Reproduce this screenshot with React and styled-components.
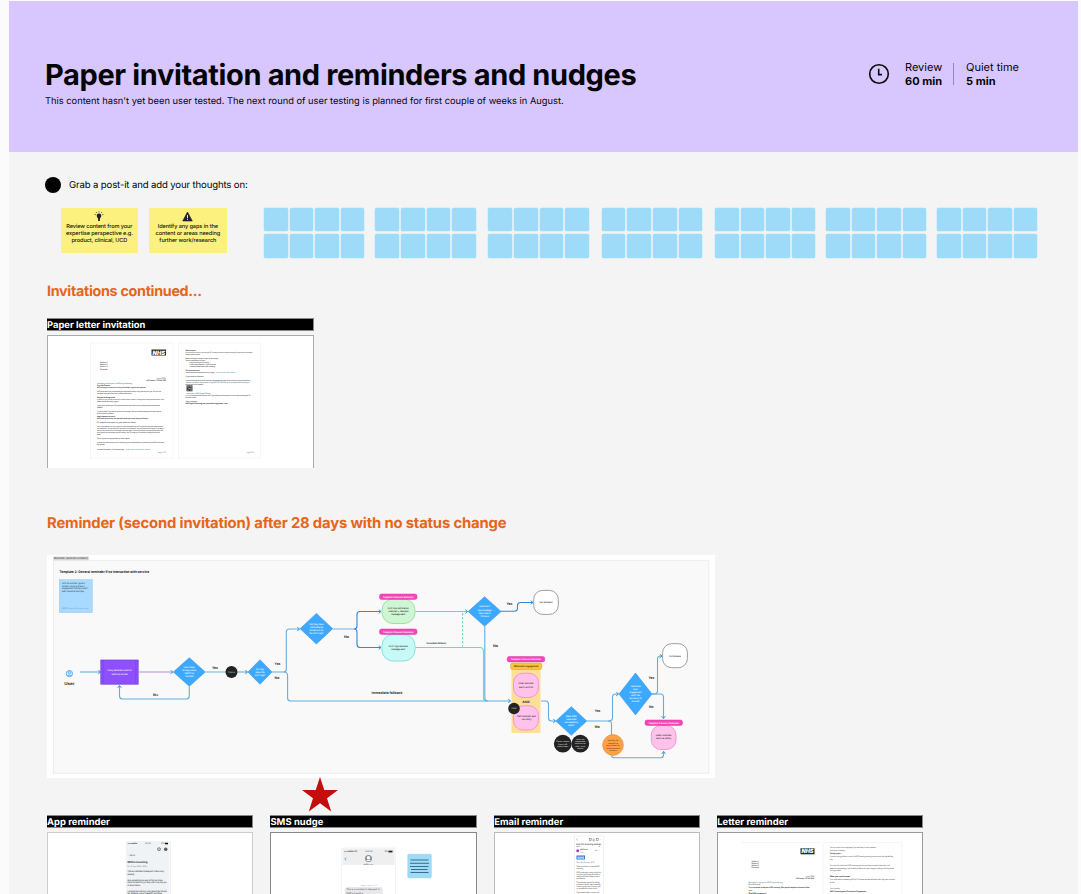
import React from "react";
import styled, { createGlobalStyle } from "styled-components";

const Global = createGlobalStyle`
  *{box-sizing:border-box}
  body{margin:0;background:#fbfbfb;overflow:hidden;font-family:Inter,"Open Sans",sans-serif;color:#050505;text-rendering:geometricPrecision}
  svg{display:block}
`;
const Board = styled.main`
  width:1069px;height:893px;margin:1px 0 0 9px;background:#f4f4f4;overflow:hidden;
  display:flex;flex-direction:column;
`;
const Banner = styled.header`
  height:151px;flex:none;background:#d8c7ff;padding:57px 59px 0 36px;
  display:flex;justify-content:space-between;align-items:flex-start;
`;
const Title = styled.h1`
  margin:0;font-size:29px;line-height:34px;font-weight:700;letter-spacing:${p => p.$ls};white-space:nowrap;
`;
const Subtitle = styled.p`
  margin:3px 0 0;font-size:9.3px;line-height:14px;letter-spacing:${p => p.$ls};white-space:nowrap;
`;
const Timing = styled.div`display:flex;align-items:center;padding-top:2px;`;
const ClockIcon = styled.svg`margin-right:15px;`;
const Slot = styled.div`
  font-size:11px;line-height:14px;letter-spacing:${p => p.$ls};white-space:nowrap;width:${p => p.$w}px;
  strong{display:block;font-weight:700;}
`;
const Divider = styled.i`width:1px;height:22px;background:#9688b5;margin:0 12px 0 10px;`;
const Prompt = styled.div`
  display:flex;align-items:center;gap:8px;margin:25px 0 0 36px;height:16px;font-size:9.6px;letter-spacing:${p => p.$ls};
  span{padding-top:1px}
`;
const Dot = styled.i`width:16px;height:16px;border-radius:50%;background:#000;`;
const NoteRow = styled.section`display:flex;margin:14.5px 0 0 51.6px;height:51px;align-items:flex-start;`;
const YellowNote = styled.article`
  width:77.5px;height:45.5px;margin-right:11px;background:#fcf07e;border-radius:1px;flex:none;
  display:flex;flex-direction:column;align-items:center;padding-top:3.5px;
  font-size:5.6px;line-height:7.1px;text-align:center;color:#111;font-weight:500;white-space:nowrap;letter-spacing:${p => p.$ls};
  svg{margin-bottom:1.6px;flex:none}
`;
const Pads = styled.div`display:flex;margin-left:26.5px;`;
const Pad = styled.div`
  display:grid;grid-template-columns:repeat(4,23.6px);grid-auto-rows:23.6px;gap:3.4px 2px;margin-right:${p => p.$gap}px;
`;
const Tile = styled.i`background:#9edbf9;box-shadow:0 0 0 .5px #c4e8fa;border-radius:1.5px;`;
const Heading = styled.h2`
  margin:${p => p.$top}px 0 0 38px;font-size:${p => p.$size}px;line-height:18px;font-weight:700;color:#e66519;
  letter-spacing:${p => p.$ls};white-space:nowrap;
`;
const Card = styled.article`width:${p => p.$w}px;flex:none;`;
const CardTitle = styled.h3`
  margin:0;height:13.5px;background:#000;border:1px solid #888;border-left:0;color:#fff;
  font-size:9.4px;line-height:13px;font-weight:700;letter-spacing:${p => p.$ls};white-space:nowrap;
`;
const Frame = styled.div`
  margin-top:4px;height:${p => p.$h}px;background:#fff;border:1px solid ${p => p.$line || "#aaa"};border-bottom:0;overflow:hidden;
  svg{margin:-1px 0 0 -1px}
`;
const Section = styled.section`margin:${p => p.$top}px 0 0 38px;`;
const FlowBoard = styled.section`margin:23.5px 0 0 38px;width:668px;height:223px;background:#fff;flex:none;`;
const StarRow = styled.div`height:36px;padding-left:293px;flex:none;svg{margin-top:-1px}`;
const CardRow = styled.section`display:flex;gap:17.4px;margin:.5px 0 0 38px;`;

const Tiny = ({ x, y, w, s, anchor, weight = 400, c, children }) => (
  <text transform={`translate(${x} ${y}) scale(.1)`} fontSize={s * 10} fontWeight={weight} fill={c} textAnchor={anchor}
    textLength={w * 10} lengthAdjust="spacingAndGlyphs">{children}</text>
);
const T = ({ x, y, w, s = 2, b, c = "#333", children }) => (
  <Tiny x={x} y={y} w={w} s={s} weight={b ? 700 : 400} c={c}>{children}</Tiny>
);
const Lines = ({ cx, y, rows, w, lh = 3.1, s = 2.1, c = "#fff" }) => rows.map((r, i) => (
  <Tiny key={i} x={cx} y={y + i * lh} w={w[i]} s={s} c={c} weight={500} anchor="middle">{r}</Tiny>
));
const Copy = ({ rows, s = 1.9 }) => rows.map(([x, y, w, t, c = "#333", b], i) => (
  <Tiny key={i} x={x} y={y} w={w} s={s} c={c} weight={b ? 700 : 500}>{t}</Tiny>
));

const Diamond = ({ x, y, w, h }) => (
  <path d={`M${x} ${y - h}L${x + w} ${y}L${x} ${y + h}L${x - w} ${y}Z`} fill="#3ca9ff" stroke="#3699ea" strokeWidth=".6" strokeLinejoin="round" />
);
const Wire = ({ d, c = "#64addf", head = true, dash, w = 1.1 }) => (
  <path d={d} fill="none" stroke={c} strokeWidth={w} strokeDasharray={dash} markerEnd={head ? "url(#tip)" : undefined} />
);
const Pill = ({ x, y, w = 38, c = "#f446bb", k = "#d93aa5", t = "Template 2: Generic Reminder", tc = "#fff", h = 5.4 }) => (
  <g><rect x={x} y={y} width={w} height={h} rx="2" fill={c} stroke={k} strokeWidth=".5" /><T x={x + 3.5} y={y + h / 2 + .8} w={w - 7} s={2.4} b c={tc}>{t}</T></g>
);
const Nhs = ({ x, y, w, h, c = "#26292b" }) => (
  <g><rect x={x} y={y} width={w} height={h} fill={c} /><text x={x + 1} y={y + h - .9} fontSize={h - .2} fontWeight="900" fontStyle="italic" fill="#fff" textLength={w - 2} lengthAdjust="spacingAndGlyphs">NHS</text></g>
);

function FlowChart() {
  return (
    <svg width="668" height="223.5" viewBox="47 555 668 223.5">
      <defs><marker id="tip" viewBox="0 0 6 6" refX="5" refY="3" markerWidth="5" markerHeight="5" markerUnits="userSpaceOnUse" orient="auto">
        <path d="M2.3 .8L5 3L2.3 5.2" fill="none" stroke="#3390d8" strokeWidth="1.2" /></marker></defs>
      <rect x="53.3" y="560.3" width="655.5" height="213" fill="#f9f9f9" stroke="#e8e8e8" strokeWidth=".8" />
      <rect x="53.3" y="556.5" width="35.5" height="3.8" fill="#d9d9d9" />
      <T x={54} y={559.3} w={34} s={2.8} c="#222">Reminder (second invitation)</T>
      <T x={59.5} y={572.6} w={89.5} s={3.5} b c="#222">Template 2: General reminder if no interaction with service</T>
      <rect x="59.3" y="579.7" width="33" height="33" fill="#a8daff" stroke="#93c7ec" strokeWidth=".5" />
      <T x={62} y={584} w={23} s={2.1}>Until the reminder: generic</T>
      <T x={62} y={586.6} w={23} s={2.1}>content, covering those in</T>
      <T x={62} y={589.2} w={26} s={2.1}>engagement that they haven't</T>
      <T x={62} y={591.8} w={22} s={2.1}>been joined to start app</T>
      <T x={62} y={609.3} w={26} s={2} c="#5f8fae">NBSS: Generic 2nd invite date</T>

      <circle cx="69.4" cy="673.6" r="3.1" fill="#dff1ff" stroke="#3ca9ff" strokeWidth=".9" />
      <circle cx="69.4" cy="672.7" r="1.1" fill="none" stroke="#3390d8" strokeWidth=".7" />
      <path d="M67.4 675.9q2-2 4 0" fill="none" stroke="#3390d8" strokeWidth=".7" />
      <T x={64.2} y={684.5} w={10.5} s={4.2} b>User</T>
      <Wire d="M80 672H100.5" />
      <rect x="100.8" y="660" width="37.4" height="24.2" fill="#8e4fff" stroke="#7440d3" strokeWidth=".7" />
      <path d="M103.3 660V684M135.7 660V684" stroke="#7440d3" strokeWidth=".5" />
      <Lines cx={119.5} y={671.4} rows={["Every Reminder event to", "within to normal"]} w={[24, 16]} />
      <Wire d="M138.5 672H172.8" c="#b48be0" />
      <Diamond x={189.3} y={672} w={16} h={14.3} />
      <Lines cx={189.3} y={668} rows={["Has it been", "28 days since", "NBSS is", "normal"]} w={[11, 14, 9, 8]} />
      <T x={212} y={668.6} w={6} s={3.5} b>Yes</T>
      <Wire d="M205.5 672H226" head={false} c="#78bdec" />
      <Wire d="M237.5 672H247.5" /><circle cx="231.5" cy="672" r="6" fill="#222" />
      <Lines cx={231.5} y={672.8} rows={["Status"]} w={[7]} c="#bbb" />
      <Diamond x={260} y={672} w={12} h={12.3} />
      <Lines cx={260} y={669.7} rows={["Do they", "have the", "NHS App?"]} w={[8, 9, 10.5]} />
      <Wire d="M189.3 686.5V696q0 3-3 3H122.5q-3 0-3-3V685.5" />
      <T x={153} y={696.2} w={5.2} s={3.4} b>No</T>
      <T x={274.6} y={665.2} w={5.8} s={3.5} b>Yes</T><T x={274.6} y={679} w={5} s={3.5} b>No</T>
      <Wire d="M272 672H284q2.3 0 2.3-3V632q0-3 3-3H299.5" />
      <Wire d="M284 672q3.6 0 3.6 4V698q0 3 3 3H510.5" />
      <T x={371.5} y={693.6} w={31} s={3.6} b>Immediate fallback</T>
      <Diamond x={316.4} y={628.7} w={16.3} h={15.3} />
      <Lines cx={316.4} y={624.5} rows={["Did they have", "notifications", "turned on for", "the NHS App?"]} w={[14, 13, 14, 14]} />
      <Wire d="M354 629q3 0 3-3V614.5q0-3 3-3H381" c="#3288d2" />
      <Wire d="M354 629q3 0 3 3V644.5q0 3 3 3H381" c="#3288d2" />
      <Wire d="M333 629H355" c="#84bfe9" head={false} w={1.2} />
      <T x={344} y={637.6} w={5} s={3.5} b>No</T>
      <rect x="382" y="599" width="33" height="24.5" rx="11" fill="#cff6d3" stroke="#a2dfaa" />
      <Lines cx={398.3} y={608.8} rows={["NHS App notification", "(natural) + tailored", "message sent"]} w={[21, 20, 14]} c="#222" />
      <rect x="382" y="634.5" width="33" height="26.5" rx="11" fill="#c7faf7" stroke="#8be1dd" />
      <Lines cx={398.3} y={647} rows={["NHS App tailored", "message sent"]} w={[19, 14]} c="#222" />
      <Pill x={379.5} y={594} w={37.5} /><Pill x={379.5} y={629} w={37.5} />
      <Wire d="M415.5 611.5H467.5" c="#78d692" />
      <Wire d="M415.5 647.5H480q3.5 0 3.5 4V698q0 3 3 3" c="#70d5cd" head={false} />
      <Wire d="M462.6 613V646.5" c="#70d5cd" head={false} dash="2.5 1.5" />
      <T x={426.5} y={644} w={19.5} s={2.5} b>Immediate fallback</T>
      <Diamond x={484.6} y={611.5} w={16.5} h={14.8} />
      <Lines cx={484.6} y={607.4} rows={["Has the NHS", "App message", "been read in", "72 hours"]} w={[11, 14, 11.5, 8.5]} />
      <Wire d="M484.8 626.5V698q0 3 3 3" head={false} />
      <T x={493} y={647} w={5} s={3.5} b>No</T>
      <T x={506.5} y={605.4} w={6} s={3.5} b>Yes</T>
      <Wire d="M501 611.3H514q3.5 0 3.5-3V605.5q0-3 3-3H533" c="#3288d2" />
      <rect x="533.7" y="590.4" width="24.6" height="24" rx="9" fill="#fff" stroke="#888" strokeWidth=".8" />
      <Lines cx={546} y={603.4} rows={["No fallback"]} w={[13]} c="#222" />

      <rect x="511.5" y="663" width="29" height="70" fill="#fddf9a" />
      <Pill x={507.2} y={656.5} w={37.5} /><Pill x={510.5} y={663} w={31.3} h={6.5} c="#fbc43c" k="#d8a22b" t="NHS multi-engagement" tc="#332800" />
      <rect x="513.5" y="673.2" width="25" height="24.3" rx="9.5" fill="#ffc2eb" stroke="#f78dd6" strokeWidth=".9" />
      <rect x="513.5" y="705.8" width="25" height="24.3" rx="9.5" fill="#ffc2eb" stroke="#f78dd6" strokeWidth=".9" />
      <Lines cx={526} y={684.4} rows={["Email reminder", "sent via PHG"]} w={[15, 14]} c="#222" />
      <T x={522.2} y={702.6} w={7.5} s={3.1} b>AND</T>
      <Lines cx={526.5} y={717} rows={["SMS reminder sent", "via notify"]} w={[19, 10]} c="#222" />
      <circle cx="514" cy="708.5" r="5.8" fill="#222" /><Lines cx={514} y={709.3} rows={["Email"]} w={[5]} c="#ccc" />
      <Wire d="M541 701H545.5q3 0 3 3V718q0 3 3 3H555.5" />
      <Diamond x={571.3} y={721} w={15.5} h={14.3} />
      <Lines cx={571.3} y={717} rows={["Was SMS", "received", "successfully", "sent?"]} w={[11, 10, 13.5, 6]} />
      <circle cx="562.8" cy="743.7" r="8.9" fill="#222" /><circle cx="580.3" cy="743.7" r="8.9" fill="#222" />
      <Lines cx={562.8} y={742} rows={["Check status", "from PHG", "each hour"]} w={[13, 9, 11]} s={1.9} lh={2.5} c="#ddd" />
      <Lines cx={580.3} y={739.8} rows={["Send and", "separate", "failures for", "SMS / email", "status"]} w={[8, 10, 11, 10, 6]} s={1.8} lh={2.3} c="#ddd" />
      <T x={594.8} y={712} w={5.5} s={3.5} b>Yes</T><T x={594.8} y={728.2} w={5} s={3.5} b>No</T>
      <Wire d="M587 721H608q4.5 0 4.5-3V697q0-3 3-3H618.5" />
      <Wire d="M608 721q3.5 0 3.5 3V735" head={false} />
      <circle cx="613" cy="745" r="10.4" fill="#ffa044" stroke="#df8935" strokeWidth=".6" />
      <Lines cx={613} y={741.3} rows={["Identify for", "request to", "pay letter to", "recommended", "in hours"]} w={[11, 10, 13, 14, 8]} s={1.9} lh={2.5} c="#64401c" />
      <Wire d="M611.5 755.5q0 2.2 3 2.2H660.6q3 0 3-3V751.5" />
      <Diamond x={635.5} y={694} w={16.5} h={21} />
      <Lines cx={635.5} y={686.7} rows={["Has there", "been", "engagement", "with the", "service in 72", "hours?"]} w={[10, 5, 12, 9, 12, 8]} />
      <T x={648.5} y={679.2} w={5.8} s={3.5} b>Yes</T><T x={649} y={708.4} w={4.5} s={3.5} b>No</T>
      <Wire d="M652 694H654.5q3 0 3-3V659q0-3 3-3H662" />
      <Wire d="M652 694H660.5q3 0 3 3V718.5" />
      <rect x="662.6" y="643.7" width="24.8" height="24" rx="9" fill="#fff" stroke="#888" strokeWidth=".8" />
      <Lines cx={675} y={656.5} rows={["End fallback"]} w={[12]} c="#222" />
      <rect x="651.3" y="725.5" width="24.7" height="24" rx="9.5" fill="#ffc2eb" stroke="#f78dd6" strokeWidth=".9" />
      <Lines cx={663.7} y={736} rows={["Letter reminder", "sent via Notify"]} w={[16, 15]} c="#222" />
      <Pill x={645} y={720} w={37.5} />
    </svg>
  );
}

const teal = "#2b7186";
const pageOne = [
  [97, 384, 35, "Invitation to take part in NHS lung screening", teal],
  [97, 386.2, 13, "Dear Ms Sample", "#222", 1],
  [97, 388.3, 49, "NHS screening is a new service to help prevent bowel, lung and other problems.", "#222", 1],
  [97, 392.2, 64, "NHS online means you can complete your health check online at any time that suits you. You can also"],
  [97, 394.3, 35, "choose to have your check with a health professional."],
  [97, 398, 18, "Why you are being invited", "#111", 1],
  [97, 400, 67, "It checks for signs you may be more likely to develop some conditions, including stroke, kidney and heart disease, which"],
  [97, 402, 22, "often have no early signs."],
  [97, 406.2, 63, "Taking part in screening and finding out more about your health early can help you to prevent problems"],
  [97, 408.2, 6, "later."],
  [97, 412, 64, "It is your choice if you want to take part in screening. You can read more about your choices and the"],
  [97, 414, 17, "tests at the link below."],
  [97, 417.7, 18, "How to complete the check", "#111", 1],
  [97, 419.8, 51, "NHS health check online asks questions about your health, body and lifestyle", "#222", 1],
  [97, 423.7, 39, "Or complete the check on your phone or tablet."],
  [97, 427.7, 66, "Then, if you need to, we will ask you to visit your local pharmacy or GP surgery to check your blood pressure"],
  [97, 429.7, 67, "and cholesterol. This can help tell if you are at risk of problems. You may have to do this again if a reading is"],
  [97, 431.7, 66, "unclear. Your results will be sent to you within two weeks. We will also explain what your results mean and"],
  [97, 433.7, 63, "what you can do next to keep yourself healthy. Your GP surgery will also receive a copy of the results"],
  [97, 435.7, 4, "too."],
  [97, 439, 33, "Call us if you have any questions or need support."],
  [97, 443, 67, "If you do not want to take part in this screening, you can opt out online or by contacting the NHS service team"],
  [97, 445, 8, "by phone."],
  [97, 450.8, 27, "For more information, visit the web page:"],
  [125.5, 450.8, 25, "www.nhs.uk/health-check", "#4c98af"],
];
const pageTwo = [
  [185.5, 351.5, 10, "What to expect", "#111", 1],
  [185.5, 353.5, 67, "We will send your results to you and your GP. You may be asked to contact the surgery for more advice and support"],
  [185.5, 355.5, 15, "about your results."],
  [185.5, 359.2, 33, "Before starting the check it helps to have ready:"],
  [185.5, 361.2, 20, "You will need details of your:"],
  [189, 363.3, 20, "• height and weight in cm and kg"],
  [189, 365.3, 27, "• waist measurement, if you have one"],
  [189, 367.3, 26, "• recent blood pressure reading"],
  [185.5, 371, 14, "Start your health check", "#111", 1],
  [185.5, 373, 29, "You can complete the questions on this page"],
  [216, 373, 19, "www.nhs.uk/start", "#4c98af"],
  [185.5, 377, 18, "If you need assistance"],
  [185.5, 381, 65, "If you cannot complete the check online you can contact the support team and they will help you complete it"],
  [185.5, 383.2, 64, "www.nhs.uk/contact-health-check or ring 0300 123 1234 and we will arrange another way for you", teal],
  [185.5, 385.2, 18, "to take part with support."],
  [185.5, 394.5, 25, "Thank you, NHS Health Check", teal],
  [185.5, 396.6, 65, "This is an automated letter from the NHS. If you think you have received it in error, please contact your GP"],
  [185.5, 398.6, 11, "to let them know."],
  [185.5, 402.5, 12, "Yours sincerely,"],
  [185.5, 404.5, 42, "NHS Digital Screening and Prevention Programme Team", "#111", 1],
];

function Address({ x, y }) {
  return ["Address 1", "Address 2", "Address 3", "Postcode"].map((t, i) => <T key={t} x={x} y={y + i * 2.3} w={7.5} s={2} b c="#555">{t}</T>);
}
function LetterArt() {
  return (
    <svg width="266" height="132.5" viewBox="47 335.5 266 132.5">
      <rect x="90.5" y="343.5" width="82.5" height="115" fill="#fff" stroke="#f3f3f3" strokeWidth=".7" />
      <rect x="178.5" y="343.5" width="82" height="115" fill="#fff" stroke="#f3f3f3" strokeWidth=".7" />
      <Nhs x={151.5} y={350} w={14.5} h={6} />
      <Address x={100} y={363.2} />
      <T x={156} y={379.6} w={10} s={1.9}>1 July 2024</T><T x={146.5} y={381.7} w={19.5} s={1.9} b>NHS number: 123 456 7890</T>
      <Copy rows={pageOne} /><T x={158} y={453.5} w={8} s={1.9}>Page 1 of 2</T>
      <Copy rows={pageTwo} /><T x={247} y={453.5} w={7} s={1.9}>Page 2 of 2</T>
      <rect x="186.5" y="385.8" width="6" height="6" fill="#444" />
      <path d="M187.3 387.3h1.5M190 386.8h1.5M188.5 389h2M187.3 390.8h1.2M190.3 390.5h1.5M191.5 388v1" stroke="#ddd" strokeWidth=".6" />
    </svg>
  );
}
function AppArt() {
  return (
    <svg width="206" height="63" viewBox="47 832 206 63">
      <rect x="126" y="841" width="43.5" height="55" fill="#eff3f5" /><path d="M170.5 841V895" stroke="#eee" strokeWidth=".8" />
      <T x={127.5} y={844.3} w={9.5} s={2} b c="#111">•••• mobile</T><T x={145} y={844.3} w={5.5} s={2}>9:41 AM</T><T x={161} y={844.3} w={3.8} s={2}>100%</T><rect x="165" y="842.8" width="3" height="1.5" fill="#111" />
      <circle cx="159" cy="849.2" r="1.5" fill="none" stroke="#444" strokeWidth=".6" /><path d="M159 848.4v1.5" stroke="#444" strokeWidth=".5" />
      <circle cx="165.7" cy="849.2" r="1.7" fill="#444" /><path d="M164 849h3.4M165.7 847.5v3.4" stroke="#aaa" strokeWidth=".3" />
      <T x={128.5} y={856.3} w={6.5} s={2.4} b c="#3489c6">‹ Back</T>
      <T x={127.5} y={863} w={20} s={2.8} b c="#222">NHS screening</T>
      <T x={127.5} y={866.8} w={20} s={2} c="#668">Sent: 9 August 2024 at 9:30am</T>
      <Copy s={2.2} rows={[
        [127.5, 872, 36, "This is a reminder to take part in NHS lung", "#222"], [127.5, 875, 7, "screening.", "#222"],
        [127.5, 880.5, 35, "NHS screening is a way to find out more"], [127.5, 883.2, 39, "about the health of your body, which may help you"], [127.5, 886, 13, "to make choices."],
        [127.5, 891.5, 39, "A programme is starting. It only takes a few minutes"], [127.5, 894.2, 35, "to check your health online."]]} />
    </svg>
  );
}
function SmsArt() {
  return (
    <svg width="206.5" height="63" viewBox="270.5 832 206.5 63">
      <path d="M342 894V848H396V894" fill="#fff" stroke="#ececec" strokeWidth=".6" /><rect x="343" y="848.5" width="52" height="16.5" fill="#efeff0" />
      <T x={344.5} y={852.3} w={13} s={2.1} b>•••• mobile LTE</T><T x={366} y={852.3} w={7} s={2.1}>9:41 AM</T><T x={385} y={852.3} w={3.8} s={2}>100%</T><rect x="389" y="850.7" width="4" height="1.7" fill="#222" />
      <path d="M346.6 857.4L345.4 858.9L346.6 860.4" fill="none" stroke="#2687e9" strokeWidth=".7" />
      <circle cx="369" cy="858.5" r="3.5" fill="#8b9199" /><circle cx="369" cy="857.8" r="1.7" fill="#fff" /><path d="M366.5 861q2.5-3 5 0" fill="#fff" />
      <T x={364} y={864.5} w={9.5} s={1.9}>NHSscreen</T>
      <T x={360.5} y={885.5} w={17} s={1.8} c="#999">Today, 9 Sep at 10:30</T>
      <rect x="345.3" y="887" width="38" height="12" rx="2.5" fill="#e8e8ea" />
      <T x={347} y={890.3} w={33} s={2.4}>This is a reminder to take part in</T><T x={347} y={893.6} w={17} s={2.4}>NHS screening.</T>
      <rect x="408.3" y="854.3" width="23.5" height="23.5" rx=".8" fill="#9edbf9" stroke="#88c9e8" strokeWidth=".5" />
      <path d="M411 860H429M410.5 863.3H429.5M410.5 866.5H429M411.5 869.5H428M411 872.5H429" stroke="#275b73" strokeWidth=".85" />
    </svg>
  );
}
function EmailArt() {
  return (
    <svg width="205.5" height="63" viewBox="494 832 205.5 63">
      <path d="M574.5 894V836H603.5V894" fill="#fff" stroke="#eee" strokeWidth=".8" />
      <path d="M577.5 838.6L576.6 839.5L577.5 840.4" fill="none" stroke="#777" strokeWidth=".5" />
      <g fill="none" stroke="#666" strokeWidth=".5"><rect x="589.5" y="838.5" width="1.7" height="2" /><path d="M592.8 839h1.7M593 839.5v1.3h1.3v-1.3" /><rect x="596.2" y="838.7" width="2" height="1.6" /></g><T x={599.5} y={840.3} w={2} s={2}>…</T>
      <T x={576.3} y={844.7} w={25} s={2.2} b c="#444">NHS VPC screening reminder</T><T x={576.3} y={847.3} w={4} s={1.8}>Inbox</T><T x={598.5} y={847.3} w={1.6} s={1.8}>☆</T>
      <circle cx="577.7" cy="850.7" r="1.5" fill="#b633d6" /><T x={580} y={850.3} w={7.5} s={1.8} b>NHS Screen</T><T x={580} y={852.5} w={4} s={1.5}>to me ›</T><T x={595} y={851.2} w={5} s={1.8}>↩ …</T>
      <rect x="576.5" y="855.5" width="8.5" height="4" fill="#2575c9" /><T x={577.3} y={858.7} w={6.8} s={3.5} b c="#fff">NHS</T>
      <Copy s={2} rows={[
        [576.5, 863.3, 18, "Dear Ms Sample, NHS", "#777"], [576.5, 867, 23, "Take up invitation to see the NHS", "#333"], [576.5, 869.2, 7, "screening."],
        [576.5, 873, 24.5, "NHS screening is a way to help find"], [576.5, 875.1, 24, "out about your body and health to"], [576.5, 877.2, 23, "understand what helps prevent"], [576.5, 879.3, 9, "problems."],
        [576.5, 882.8, 23, "This includes checks for kidney"], [576.5, 884.9, 24, "and heart health, which usually"], [576.5, 887, 24, "have no symptoms. It is up to you"], [576.5, 889.2, 21, "to complete the online check."], [576.5, 893, 23, "If you need help, contact us."]]} />
    </svg>
  );
}
function ReminderArt() {
  return (
    <svg width="206" height="63" viewBox="716.5 832 206 63">
      <path d="M741 842.5H820.5M822.5 894V842.5H901.5V894" fill="none" stroke="#f0f0f0" strokeWidth=".7" />
      <Nhs x={800} y={848.3} w={14} h={6} /><Address x={751} y={861.5} />
      <T x={805} y={877.2} w={9} s={1.9}>1 July 2024</T><T x={795.5} y={879.3} w={18} s={1.9} b>NHS number: 123 456 7890</T>
      <Copy s={2} rows={[
        [748, 882.5, 34, "Reminder to take part in NHS lung screening", teal], [748, 885.2, 12, "Dear Ms Sample"], [748, 888.2, 61, "This is a reminder to take part in NHS screening. Most people complete it online and it takes", "#222", 1], [748, 891, 4, "less."], [748, 894, 18, "What NHS screening is", "#111", 1],
        [829.5, 848.3, 46, "You can contact us in many ways if you need help or have a question"], [829.5, 851.2, 15, "about your screening."], [829.5, 854.1, 11, "Getting support", "#222", 1], [829.5, 857, 63, "If you are having problems, contact the NHS screening team by phone or email and they will help"], [829.5, 860, 3, "you."],
        [829.5, 865.7, 60, "For more information about NHS screening, your data and how it is used to help others, visit"], [829.5, 868.6, 64, "www.nhs.uk/screening or ask a health professional at your surgery to help you find the details"], [829.5, 871.3, 11, "that you need."],
        [829.5, 877.2, 20, "What your results mean", "#111", 1], [829.5, 880.2, 65, "Your results will be reviewed by NHS staff. The letter we send will explain what they mean and what"], [829.5, 883, 5, "to do."], [829.5, 889, 10, "Yours sincerely,"], [829.5, 891.8, 36, "NHS Screening and Prevention Programme", "#222", 1]]} />
    </svg>
  );
}

const cards = [
  ["App reminder", AppArt, "#ccc", 206, ".04px"],
  ["SMS nudge", SmsArt, "#888", 206.5, ".08px"],
  ["Email reminder", EmailArt, "#bbb", 205.5, ".04px"],
  ["Letter reminder", ReminderArt, "#999", 206, ".04px"],
];
const padGaps = [11, 12.6, 13, 12.8, 10.6, 10.6, 0];

export default function App() {
  return (
    <><Global /><Board>
      <Banner>
        <div>
          <Title $ls="-.37px">Paper invitation and reminders and nudges</Title>
          <Subtitle $ls="0">This content hasn't yet been user tested. The next round of user testing is planned for first couple of weeks in August.</Subtitle>
        </div>
        <Timing>
          <ClockIcon width="22" height="22" viewBox="0 0 22 22" fill="none" stroke="#080808"><circle cx="11" cy="11" r="9.3" strokeWidth="1.6" /><path d="M10.7 5.8V11.6H14" strokeWidth="1.6" /></ClockIcon>
          <Slot $w={38} $ls="0">Review<strong>60 min</strong></Slot><Divider />
          <Slot $w={53} $ls="0">Quiet time<strong>5 min</strong></Slot>
        </Timing>
      </Banner>
      <Prompt $ls="-.14px"><Dot /><span>Grab a post-it and add your thoughts on:</span></Prompt>
      <NoteRow>
        <YellowNote $ls="-.11px"><svg width="10" height="11" viewBox="0 0 10 11"><path d="M5 2.5a2.3 2.3 0 0 0-2.2 2.7c.2 1.3 1.2 1.6 1.3 3V10h1.8V8.2c.1-1.4 1.1-1.7 1.3-3A2.3 2.3 0 0 0 5 2.5Z" fill="#222" /><path d="M5 .3v1.2M2 1l.8 1M8 1l-.8 1M.5 3.5l1.3.2M9.5 3.5l-1.3.2" stroke="#333" strokeWidth=".7" /></svg><span>Review content from your<br />expertise perspective e.g.<br />product, clinical, UCD</span></YellowNote>
        <YellowNote $ls="-.09px"><svg width="11" height="11" viewBox="0 0 11 11"><path d="M5.5 1L10.3 10H.7Z" fill="#222" stroke="#222" strokeWidth=".6" strokeLinejoin="round" /><path d="M5.5 4v3M5.5 7.8v1" stroke="#fcf07e" strokeWidth="1" /></svg><span>Identify any gaps in the<br />content or areas needing<br />further work/research</span></YellowNote>
        <Pads>{padGaps.map((g, i) => <Pad key={i} $gap={g}>{Array.from({ length: 8 }, (_, j) => <Tile key={j} />)}</Pad>)}</Pads>
      </NoteRow>
      <Heading $top={24.5} $size={14.3} $ls="-.29px">Invitations continued...</Heading>
      <Section $top={17}><Card $w={266.5}><CardTitle $ls=".02px">Paper letter invitation</CardTitle><Frame $h={132.5}><LetterArt /></Frame></Card></Section>
      <Heading $top={46} $size={14.8} $ls="-.16px">Reminder (second invitation) after 28 days with no status change</Heading>
      <FlowBoard><FlowChart /></FlowBoard>
      <StarRow><svg width="36" height="36" viewBox="0 0 36 36"><path d="M18 0L22.3 13H36L25 21.2L29.2 34.5L18 26.3L6.8 34.5L11 21.2L0 13H13.7Z" fill="#c40d0d" /></svg></StarRow>
      <CardRow>{cards.map(([name, Art, line, w, ls]) => <Card key={name} $w={w}><CardTitle $ls={ls}>{name}</CardTitle><Frame $h={63} $line={line}><Art /></Frame></Card>)}</CardRow>
    </Board></>
  );
}
